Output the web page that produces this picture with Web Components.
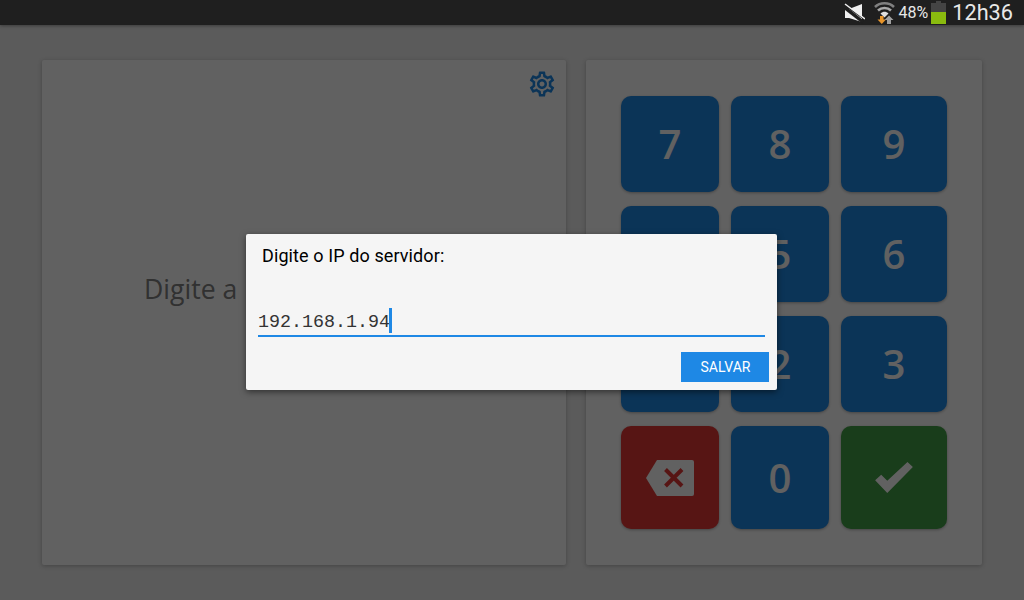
<!DOCTYPE html>
<html lang="pt">
<head>
<meta charset="utf-8">
<title>Ponto</title>
<style>
    html, body { margin: 0; height: 100%; background: #eeeeee; overflow: hidden; }
    body { font-family: Roboto, "Liberation Sans", sans-serif; }
</style>
</head>
<body>
<tablet-screen>
    <status-bar slot="status"></status-bar>
    <login-card slot="left">Digite a</login-card>
    <key-pad slot="right"></key-pad>
    <ip-dialog slot="dialog" title="Digite o IP do servidor:" value="192.168.1.94" action="SALVAR"></ip-dialog>
</tablet-screen>

<script>
class TabletScreen extends HTMLElement {
    constructor() {
        super();
        this.attachShadow({ mode: 'open' });
        this.shadowRoot.innerHTML = `
            <style>
                :host {
                    display: flex;
                    flex-direction: column;
                    width: 1024px;
                    height: 600px;
                    position: relative;
                }
                .content {
                    flex: 1;
                    display: grid;
                    grid-template-columns: 524px 396px;
                    gap: 20px;
                    padding: 35px 42px;
                    min-height: 0;
                }
                /* dim layer of the modal */
                .scrim {
                    position: absolute;
                    top: 25px;
                    left: 0;
                    right: 0;
                    bottom: 0;
                    padding: 0 1px 1px 0;
                    background: rgba(0,0,0,0.62);
                    display: flex;
                    align-items: center;
                    justify-content: center;
                }
            </style>
            <slot name="status"></slot>
            <div class="content">
                <slot name="left"></slot>
                <slot name="right"></slot>
            </div>
            <div class="scrim"><slot name="dialog"></slot></div>
        `;
    }
}

class StatusBar extends HTMLElement {
    constructor() {
        super();
        this.attachShadow({ mode: 'open' });
        this.shadowRoot.innerHTML = `
            <style>
                :host {
                    display: flex;
                    align-items: center;
                    justify-content: flex-end;
                    height: 25px;
                    flex: none;
                    background: #1f1f1f;
                    color: #e8e8e8;
                    padding-right: 11px;
                    position: relative;
                    z-index: 1;
                    box-shadow: 0 1px 3px rgba(0,0,0,0.35);
                }
                svg { display: block; flex: none; }
                .mute { margin-right: 9px; }
                .wifi { margin-right: 4px; }
                .pct { font-size: 16px; margin-right: 3px; }
                .time { font-size: 21.7px; margin-left: 6px; }
            </style>
            <svg class="mute" width="21" height="23" viewBox="0 0 21 23">
                <path d="M1 8H5L18 3V21L5 17H1z" fill="#f0f0f0"/>
                <path d="M0 6L19 21" stroke="#1f1f1f" stroke-width="3.500"/>
                <path d="M0 3.500L20 18" stroke="#1f1f1f" stroke-width="1.500"/>
                <path d="M1 3L21 18" stroke="#f0f0f0" stroke-width="1.500"/>
            </svg>
            <svg class="wifi" width="21" height="23" viewBox="0 0 21 23">
                <path d="M1 6C6 1 15 1 20 6" fill="none" stroke="#808080" stroke-width="2.500"/>
                <path d="M4 9.500C7.500 6 13.500 6 17 9.500" fill="none" stroke="#a8a8a8" stroke-width="2.500"/>
                <path d="M6.500 12.500C9 10 12 10 14.500 12.500L10.500 16.500z" fill="#e0e0e0"/>
                <path d="M6 15h3.500v3.500H12L7.800 23 3.500 18.500H6z" fill="#e8952a"/>
                <path d="M13 23v-4h-2.500L15 14.500l4.500 4.500H17v4z" fill="#a0a0a0"/>
            </svg>
            <span class="pct">48%</span>
            <svg width="15" height="23" viewBox="0 0 15 23">
                <path d="M5 0h5v2h5v9H0V2h5z" fill="#444"/>
                <rect y="11" width="15" height="12" fill="#8abb0f"/>
            </svg>
            <span class="time">12h36</span>
        `;
    }
}

class LoginCard extends HTMLElement {
    constructor() {
        super();
        this.attachShadow({ mode: 'open' });
        this.shadowRoot.innerHTML = `
            <style>
                :host {
                    display: flex;
                    flex-direction: column;
                    background: #ffffff;
                    border-radius: 2px;
                    box-shadow: 0 1px 4px rgba(0,0,0,0.25);
                }
                .top {
                    display: flex;
                    justify-content: flex-end;
                    padding: 9px 9px 0 0;
                }
                svg { display: block; }
                .prompt {
                    margin-top: 172px;
                    padding-left: 102px;
                    font-family: "Open Sans", sans-serif;
                    font-size: 26.6px;
                    color: #808080;
                }
            </style>
            <div class="top">
                <svg width="30" height="30" viewBox="0 0 24 24" fill="#1e88e5">
                    <path d="M19.43 12.98c.04-.32.07-.64.07-.98 0-.34-.03-.66-.07-.98l2.11-1.65c.19-.15.24-.42.12-.64l-2-3.46c-.09-.16-.26-.25-.44-.25-.06 0-.12.01-.17.03l-2.49 1c-.52-.4-1.08-.73-1.69-.98l-.38-2.65C14.46 2.18 14.25 2 14 2h-4c-.25 0-.46.18-.49.42l-.38 2.65c-.61.25-1.17.59-1.69.98l-2.49-1c-.06-.02-.12-.03-.18-.03-.17 0-.34.09-.43.25l-2 3.46c-.13.22-.07.49.12.64l2.11 1.65c-.04.32-.07.65-.07.98 0 .33.03.66.07.98l-2.11 1.65c-.19.15-.24.42-.12.64l2 3.46c.09.16.26.25.44.25.06 0 .12-.01.17-.03l2.49-1c.52.4 1.08.73 1.69.98l.38 2.65c.03.24.24.42.49.42h4c.25 0 .46-.18.49-.42l.38-2.65c.61-.25 1.17-.59 1.69-.98l2.49 1c.06.02.12.03.18.03.17 0 .34-.09.43-.25l2-3.46c.12-.22.07-.49-.12-.64l-2.11-1.65zm-1.98-1.71c.04.31.05.52.05.73 0 .21-.02.43-.05.73l-.14 1.13.89.7 1.08.84-.7 1.21-1.27-.51-1.04-.42-.9.68c-.43.32-.84.56-1.25.73l-1.06.43-.16 1.13-.2 1.35h-1.4l-.19-1.35-.16-1.13-1.06-.43c-.43-.18-.83-.41-1.23-.71l-.91-.7-1.06.43-1.27.51-.7-1.21 1.08-.84.89-.7-.14-1.13c-.03-.31-.05-.54-.05-.74s.02-.43.05-.73l.14-1.13-.89-.7-1.08-.84.7-1.21 1.27.51 1.04.42.9-.68c.43-.32.84-.56 1.25-.73l1.06-.43.16-1.13.2-1.35h1.39l.19 1.35.16 1.13 1.06.43c.43.18.83.41 1.23.71l.91.7 1.06-.43 1.27-.51.7 1.21-1.07.85-.89.7.14 1.13zM12 8c-2.21 0-4 1.79-4 4s1.79 4 4 4 4-1.79 4-4-1.79-4-4-4zm0 6c-1.1 0-2-.9-2-2s.9-2 2-2 2 .9 2 2-.9 2-2 2z"/>
                </svg>
            </div>
            <div class="prompt"><slot></slot></div>
        `;
    }
}

class KeyButton extends HTMLElement {
    constructor() {
        super();
        this.attachShadow({ mode: 'open' });
        this.shadowRoot.innerHTML = `
            <style>
                :host {
                    display: flex;
                    align-items: center;
                    justify-content: center;
                    background: var(--key-color, #1e88e5);
                    color: #ffffff;
                    border-radius: 10px;
                    box-shadow: 0 1px 3px rgba(0,0,0,0.3);
                    font-family: "Open Sans", sans-serif;
                    font-weight: 600;
                    font-size: 40px;
                    line-height: 1;
                }
                :host([kind="back"]) { --key-color: #e53935; }
                :host([kind="ok"]) { --key-color: #43a047; }
            </style>
            <slot></slot>
        `;
    }
}

class KeyPad extends HTMLElement {
    constructor() {
        super();
        this.attachShadow({ mode: 'open' });
        const digits = ['7', '8', '9', '4', '5', '6', '1', '2', '3'];
        this.shadowRoot.innerHTML = `
            <style>
                :host {
                    display: grid;
                    grid-template-columns: 98px 98px 106px;
                    grid-template-rows: 96px 96px 96px 103px;
                    gap: 14px 12px;
                    align-content: start;
                    padding: 36px 35px 0;
                    background: #ffffff;
                    border-radius: 2px;
                    box-shadow: 0 1px 4px rgba(0,0,0,0.25);
                }
                svg { display: block; }
            </style>
            ${digits.map(d => `<key-button>${d}</key-button>`).join('')}
            <key-button kind="back">
                <svg width="48" height="36" viewBox="0 0 48 36">
                    <path d="M11 0H46a2 2 0 0 1 2 2V34a2 2 0 0 1-2 2H11L0 18z" fill="#fff"/>
                    <path d="M19.500 9.500L36 26M36 9.500L19.500 26" stroke="#e53935" stroke-width="4"/>
                </svg>
            </key-button>
            <key-button>0</key-button>
            <key-button kind="ok">
                <svg width="38" height="31" viewBox="797 143 112 92">
                    <path d="M797 197L815 181L833 199L893 143L909 158L833 235z" fill="#fff"/>
                </svg>
            </key-button>
        `;
    }
}

class IpDialog extends HTMLElement {
    constructor() {
        super();
        this.attachShadow({ mode: 'open' });
        this.shadowRoot.innerHTML = `
            <style>
                :host {
                    display: flex;
                    flex-direction: column;
                    width: 531px;
                    height: 156px;
                    box-sizing: border-box;
                    padding: 10px 8px 8px 0;
                    background: #f5f5f5;
                    border-radius: 2px;
                    box-shadow: 0 2px 6px rgba(0,0,0,0.5);
                    color: #000000;
                }
                .title { font-size: 18px; letter-spacing: 0.1px; line-height: 24px; padding-left: 16px; }
                .field {
                    display: flex;
                    align-items: flex-end;
                    height: 35px;
                    margin: 32px 4px 0 12px;
                    border-bottom: 2px solid #1e88e5;
                    font-family: "Liberation Mono", monospace;
                    font-size: 18.33px;
                    color: #333333;
                }
                .value { line-height: 24px; }
                .caret { width: 3px; height: 25px; background: #1e88e5; margin-left: -1px; margin-bottom: 2px; }
                .actions { display: flex; justify-content: flex-end; margin-top: auto; }
                button {
                    width: 88px;
                    height: 30px;
                    border: 0;
                    padding: 0 0 0 1px;
                    background: #1e88e5;
                    color: #ffffff;
                    font-family: Roboto, sans-serif;
                    font-size: 14px;
                }
            </style>
            <div class="title">${this.getAttribute('title')}</div>
            <div class="field"><span class="value">${this.getAttribute('value')}</span><span class="caret"></span></div>
            <div class="actions"><button>${this.getAttribute('action')}</button></div>
        `;
    }
}

customElements.define('tablet-screen', TabletScreen);
customElements.define('status-bar', StatusBar);
customElements.define('login-card', LoginCard);
customElements.define('key-button', KeyButton);
customElements.define('key-pad', KeyPad);
customElements.define('ip-dialog', IpDialog);
</script>
</body>
</html>
